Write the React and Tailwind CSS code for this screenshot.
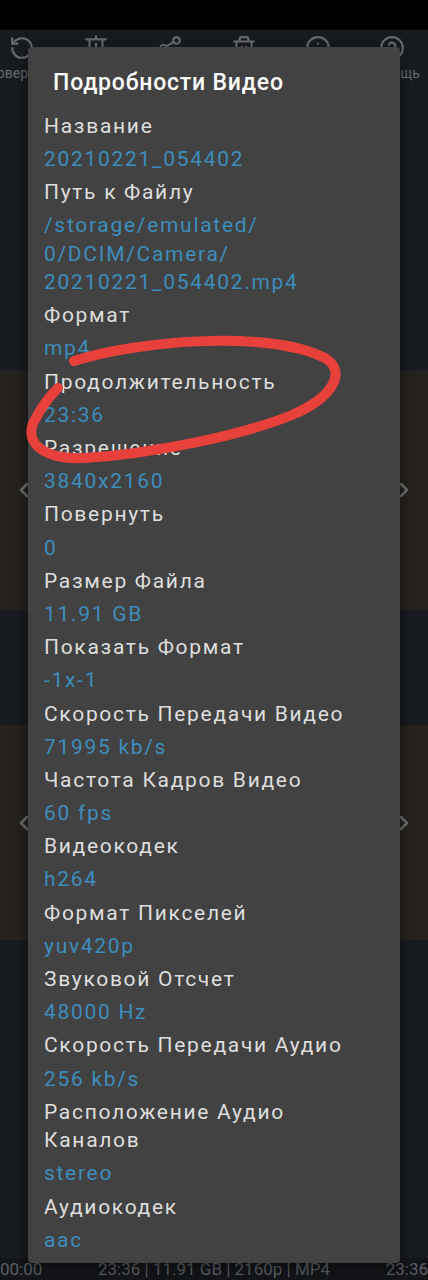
import { RotateCcw, Share2, Trash2, Info, CircleHelp, ChevronLeft, ChevronRight } from "lucide-react";

const details = [
  ["Название", "20210221_054402"],
  ["Путь к Файлу", "/storage/emulated/ 0/DCIM/Camera/ 20210221_054402.mp4"],
  ["Формат", "mp4"],
  ["Продолжительность", "23:36"],
  ["Разрешение", "3840x2160"],
  ["Повернуть", "0"],
  ["Размер Файла", "11.91 GB"],
  ["Показать Формат", "-1x-1"],
  ["Скорость Передачи Видео", "71995 kb/s"],
  ["Частота Кадров Видео", "60 fps"],
  ["Видеокодек", "h264"],
  ["Формат Пикселей", "yuv420p"],
  ["Звуковой Отсчет", "48000 Hz"],
  ["Скорость Передачи Аудио", "256 kb/s"],
  ["Расположение Аудио Каналов", "stereo"],
  ["Аудиокодек", "aac"],
];

function TrimIcon() {
  return (
    <svg width="26" height="26" viewBox="0 0 24 24" fill="none" stroke="currentColor" strokeWidth="2" strokeLinecap="round">
      <path d="M12 1v3M3 4h18M6 4v14h12V4M12 8v7" />
    </svg>
  );
}

const tools = [
  { icon: <RotateCcw size={26} />, label: "Повернуть" },
  { icon: <TrimIcon />, label: "" },
  { icon: <Share2 size={26} />, label: "" },
  { icon: <Trash2 size={26} />, label: "" },
  { icon: <Info size={26} />, label: "" },
  { icon: <CircleHelp size={26} />, label: "Помощь" },
];

export default function App() {
  return (
    <div
      className="relative w-[428px] h-[1280px] overflow-hidden bg-[#181b20]"
      style={{ fontFamily: "Roboto, 'Noto Sans', sans-serif" }}
    >
      {/* background screen */}
      <div className="flex flex-col">
        <div className="h-[30px] bg-black" />
        <div className="h-[340px] bg-[#181b20]">
          <div className="flex ml-[-15px] pt-[4px]">
            {tools.map((t, i) => (
              <div key={i} className="w-[74px] shrink-0 flex flex-col items-center text-[#686b70]">
                <div className="h-[28px] flex items-center">{t.icon}</div>
                <span className="h-[22px] text-[14px] leading-[22px] whitespace-nowrap">{t.label}</span>
              </div>
            ))}
          </div>
        </div>
        <div className="h-[240px] bg-[#25221f] flex items-center justify-between px-[12px] text-[#6f6f6f]">
          <ChevronLeft size={24} strokeWidth={2.5} />
          <ChevronRight size={24} strokeWidth={2.5} />
        </div>
        <div className="h-[115px] bg-[#181b20]" />
        <div className="h-[215px] bg-[#25221f] flex items-center justify-between px-[12px] text-[#6f6f6f] pb-[20px]">
          <ChevronLeft size={24} strokeWidth={2.5} />
          <ChevronRight size={24} strokeWidth={2.5} />
        </div>
        <div className="h-[318px] bg-[#181b20]" />
        <div className="h-[22px] bg-[#131518] flex justify-between text-[17px] leading-[22px] text-[#5d6066]">
          <span>00:00</span>
          <span>23:36 | 11.91 GB | 2160p | MP4</span>
          <span>23:36</span>
        </div>
      </div>

      {/* dialog */}
      <div className="absolute left-[28px] top-[47px] w-[372px] h-[1216px] bg-[#424242] rounded-[4px] shadow-[0_4px_16px_rgba(0,0,0,0.5)] overflow-hidden">
        <div className="pt-[22px] pl-[25px] text-[23px] leading-[28px] tracking-[0.8px] font-medium text-white">
          Подробности Видео
        </div>
        <div className="mt-[14.5px] pl-[16px] pr-[20px] flex flex-col gap-[4.7px] text-[21px] leading-[28.5px] tracking-[1.7px]">
          {details.map(([label, value]) => (
            <div key={label} className="flex flex-col gap-[4.7px]">
              <div className="text-[#dedede]">{label}</div>
              <div className="text-[#3d8dbd] break-words">{value}</div>
            </div>
          ))}
        </div>
      </div>

      {/* red marker annotation */}
      <svg className="absolute left-0 top-0 pointer-events-none" width="428" height="1280" viewBox="0 0 428 1280">
        <path
          d="M74 361 C 140 340, 270 330, 325 358 C 348 372, 332 398, 292 415 C 240 436, 150 454, 85 458 C 40 460, 22 440, 36 418 C 42 406, 50 396, 58 388"
          fill="none"
          stroke="#e8403a"
          strokeWidth="10"
          strokeLinecap="round"
          strokeLinejoin="round"
        />
      </svg>
    </div>
  );
}
